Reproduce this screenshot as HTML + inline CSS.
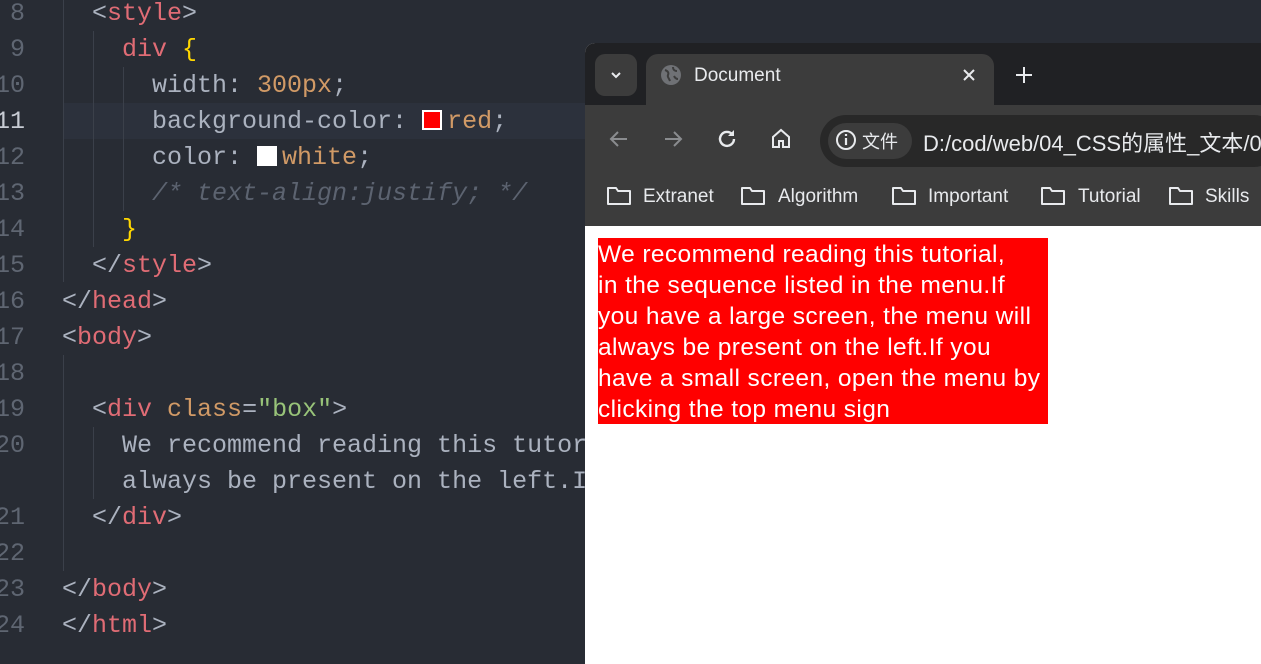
<!DOCTYPE html>
<html><head><meta charset="utf-8"><style>
body{margin:0;width:1261px;height:664px;background:#282c34;overflow:hidden;position:relative;font-family:"Liberation Mono",monospace}
.r{position:absolute;left:0;width:600px;height:36px;line-height:36px;font-size:25px;color:#abb2bf;white-space:pre}
.n{position:absolute;left:-30px;width:55px;color:#5f6672;text-align:right}
.c{position:absolute;left:62px}
.t{color:#e06c75}.v{color:#d19a66}.s{color:#98c379}.y{color:#ffd700}.cm{color:#5c6370;font-style:italic}
.hl{position:absolute;left:64px;top:103px;width:530px;height:36px;background:#2c313c}
.g{position:absolute;width:1px;background:#3b404a}
.sw{display:inline-block;width:20px;height:20px;vertical-align:-2px;border:2px solid #fff;box-sizing:border-box;margin-right:5px}
#br{position:absolute;left:585px;top:43px;width:676px;height:621px;background:#fff;border-radius:10px 0 0 0;overflow:hidden;font-family:"Liberation Sans","Noto Sans CJK SC",sans-serif}
.a{position:absolute}
.bm{position:absolute;top:143px;color:#e8eaed;font-size:19px;white-space:nowrap}
.red div{white-space:nowrap}
</style></head><body>
<div class="hl"></div>
<div class="g" style="left:63px;top:0;height:282px"></div>
<div class="g" style="left:93px;top:31px;height:216px"></div>
<div class="g" style="left:123px;top:67px;height:144px"></div>
<div class="g" style="left:63px;top:355px;height:216px"></div>
<div class="g" style="left:93px;top:427px;height:72px"></div>
<div class="r" style="top:-4px"><span class="n">8</span><span class="c">  &lt;<span class="t">style</span>&gt;</span></div>
<div class="r" style="top:32px"><span class="n">9</span><span class="c">    <span class="t">div</span> <span class="y">{</span></span></div>
<div class="r" style="top:68px"><span class="n">10</span><span class="c">      width: <span class="v">300px</span>;</span></div>
<div class="r" style="top:104px"><span class="n" style="color:#c8ccd4">11</span><span class="c">      background-color: <span class="sw" style="background:#f00"></span><span class="v">red</span>;</span></div>
<div class="r" style="top:140px"><span class="n">12</span><span class="c">      color: <span class="sw" style="background:#fff"></span><span class="v">white</span>;</span></div>
<div class="r" style="top:176px"><span class="n">13</span><span class="c cm">      /* text-align:justify; */</span></div>
<div class="r" style="top:212px"><span class="n">14</span><span class="c">    <span class="y">}</span></span></div>
<div class="r" style="top:248px"><span class="n">15</span><span class="c">  &lt;/<span class="t">style</span>&gt;</span></div>
<div class="r" style="top:284px"><span class="n">16</span><span class="c">&lt;/<span class="t">head</span>&gt;</span></div>
<div class="r" style="top:320px"><span class="n">17</span><span class="c">&lt;<span class="t">body</span>&gt;</span></div>
<div class="r" style="top:356px"><span class="n">18</span></div>
<div class="r" style="top:392px"><span class="n">19</span><span class="c">  &lt;<span class="t">div</span> <span class="v">class</span>=<span class="s">"box"</span>&gt;</span></div>
<div class="r" style="top:428px"><span class="n">20</span><span class="c">    We recommend reading this tutorial</span></div>
<div class="r" style="top:464px"><span class="c">    always be present on the left.If</span></div>
<div class="r" style="top:500px"><span class="n">21</span><span class="c">  &lt;/<span class="t">div</span>&gt;</span></div>
<div class="r" style="top:536px"><span class="n">22</span></div>
<div class="r" style="top:572px"><span class="n">23</span><span class="c">&lt;/<span class="t">body</span>&gt;</span></div>
<div class="r" style="top:608px"><span class="n">24</span><span class="c">&lt;/<span class="t">html</span>&gt;</span></div>

<div id="br">
 <div class="a" style="left:0;top:0;width:676px;height:62px;background:#202124"></div>
 <div class="a" style="left:10px;top:11px;width:42px;height:42px;border-radius:10px;background:#3c3c3c"></div>
 <svg class="a" style="left:23px;top:24px" width="16" height="16"><path d="M4 6l4 4 4-4" stroke="#e8eaed" stroke-width="2" fill="none"/></svg>
 <div class="a" style="left:61px;top:11px;width:348px;height:60px;border-radius:12px 12px 0 0;background:#3c3c3c"></div>
 <svg class="a" style="left:75px;top:21px" width="22" height="22"><circle cx="11" cy="11" r="10" fill="#6f7175"/><path d="M5 6c3 1 4 3 3 5s1 3 2 6M13 3c0 3 2 4 4 4M14 12c1 2 2 3 4 3" stroke="#3c3c3c" stroke-width="2" fill="none"/></svg>
 <div class="a" style="left:109px;top:22px;color:#e8eaed;font-size:19px">Document</div>
 <svg class="a" style="left:377px;top:25px" width="14" height="14"><path d="M2 2l10 10M12 2L2 12" stroke="#e8eaed" stroke-width="2"/></svg>
 <svg class="a" style="left:429px;top:22px" width="20" height="20"><path d="M10 2v16M2 10h16" stroke="#e8eaed" stroke-width="2"/></svg>
 <div class="a" style="left:0;top:62px;width:676px;height:121px;background:#3c3c3c"></div>
 <svg class="a" style="left:23px;top:85px" width="22" height="22"><path d="M19 11H4M10 4l-7 7 7 7" stroke="#8a8c8f" stroke-width="2" fill="none"/></svg>
 <svg class="a" style="left:77px;top:85px" width="22" height="22"><path d="M3 11h15M12 4l7 7-7 7" stroke="#8a8c8f" stroke-width="2" fill="none"/></svg>
 <svg class="a" style="left:131px;top:85px" width="22" height="22"><path d="M18 11a7 7 0 1 1-2-5" stroke="#e8eaed" stroke-width="2.4" fill="none"/><path d="M18 2v6h-6z" fill="#e8eaed"/></svg>
 <svg class="a" style="left:185px;top:84px" width="22" height="22"><path d="M3 10L11 3l8 7v10h-6v-6h-4v6H3z" stroke="#e8eaed" stroke-width="2" fill="none"/></svg>
 <div class="a" style="left:235px;top:72px;width:460px;height:52px;border-radius:26px;background:#282828"></div>
 <div class="a" style="left:243px;top:80px;width:84px;height:36px;border-radius:18px;background:#3c3c3c"></div>
 <svg class="a" style="left:250px;top:86px" width="22" height="22"><circle cx="11" cy="11" r="9" stroke="#e8eaed" stroke-width="2" fill="none"/><path d="M11 9v7M11 5v2" stroke="#e8eaed" stroke-width="2.2"/></svg>
 <div class="a" style="left:277px;top:85px;color:#e8eaed;font-size:18px">文件</div>
 <div class="a" style="left:338px;top:83px;color:#e8eaed;font-size:22px;white-space:nowrap">D:/cod/web/04_CSS的属性_文本/07</div>
 <svg class="a" style="left:21px;top:142px" width="26" height="22"><path d="M2 3h8l2 3h12v13H2z" stroke="#e8eaed" stroke-width="2" fill="none" stroke-linejoin="round"/></svg>
 <div class="bm" style="left:58px">Extranet</div>
 <svg class="a" style="left:155px;top:142px" width="26" height="22"><path d="M2 3h8l2 3h12v13H2z" stroke="#e8eaed" stroke-width="2" fill="none" stroke-linejoin="round"/></svg>
 <div class="bm" style="left:193px">Algorithm</div>
 <svg class="a" style="left:306px;top:142px" width="26" height="22"><path d="M2 3h8l2 3h12v13H2z" stroke="#e8eaed" stroke-width="2" fill="none" stroke-linejoin="round"/></svg>
 <div class="bm" style="left:343px">Important</div>
 <svg class="a" style="left:455px;top:142px" width="26" height="22"><path d="M2 3h8l2 3h12v13H2z" stroke="#e8eaed" stroke-width="2" fill="none" stroke-linejoin="round"/></svg>
 <div class="bm" style="left:493px">Tutorial</div>
 <svg class="a" style="left:583px;top:142px" width="26" height="22"><path d="M2 3h8l2 3h12v13H2z" stroke="#e8eaed" stroke-width="2" fill="none" stroke-linejoin="round"/></svg>
 <div class="bm" style="left:620px">Skills</div>
 <div class="a red" style="left:13px;top:195px;width:450px;height:186px;background:#f00;color:#fff;font-size:24.5px;letter-spacing:0.4px;line-height:31px;padding-top:1px;box-sizing:border-box;overflow:hidden">
  <div>We recommend reading this tutorial,</div>
  <div>in the sequence listed in the menu.If</div>
  <div>you have a large screen, the menu will</div>
  <div>always be present on the left.If you</div>
  <div>have a small screen, open the menu by</div>
  <div>clicking the top menu sign</div>
 </div>
</div>
</body></html>
